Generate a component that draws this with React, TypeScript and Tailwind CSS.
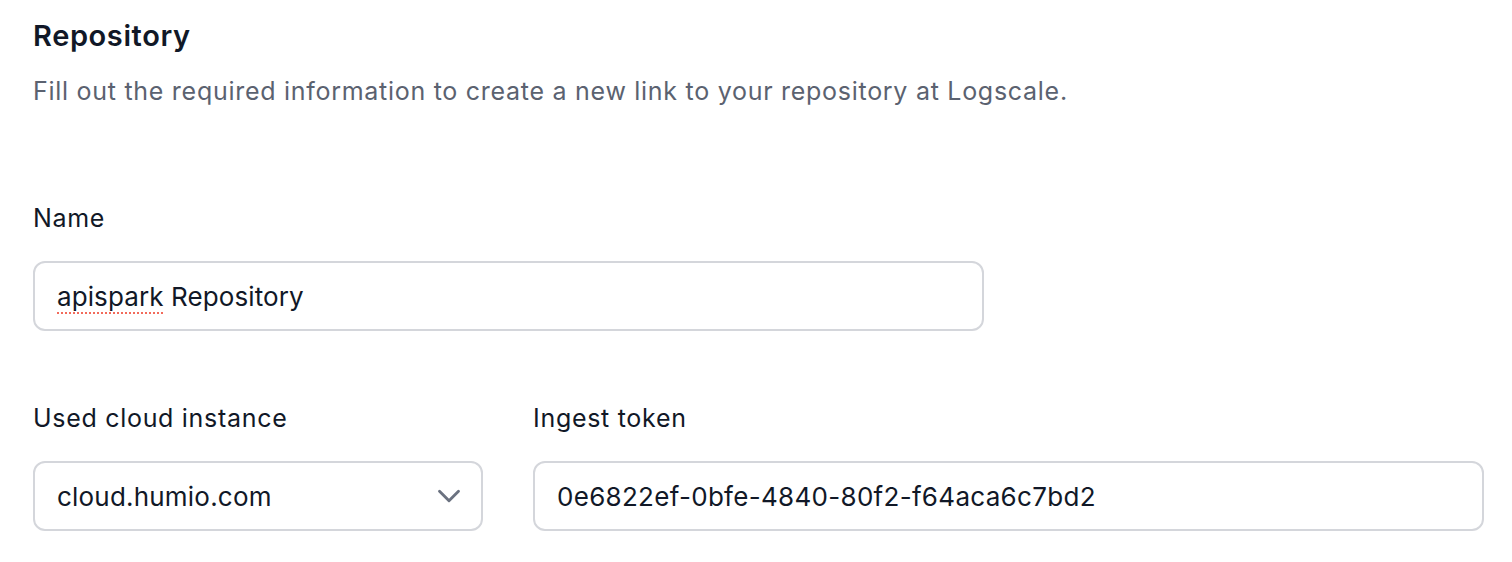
import { ChevronDown } from 'lucide-react';

export default function App() {
  return (
    <div className="min-h-[562px] bg-white pl-[33px] pt-[18px] font-['Inter',sans-serif] text-[#111827]">
      <h2 className="text-[29px] font-semibold leading-[36px] tracking-[0.6px]">Repository</h2>
      <p className="mt-[20px] text-[25px] leading-[34px] tracking-[0.72px] text-[#5b6270]">
        Fill out the required information to create a new link to your repository at Logscale.
      </p>

      <div className="mt-[93px] w-[951px]">
        <label className="block text-[25px] leading-[34px] tracking-[0.7px]">Name</label>
        <div className="mt-[26px] flex h-[70px] items-center rounded-[12px] border-2 border-[#d4d6db] px-[22px] text-[26px] tracking-[0.1px]">
          <span className="underline decoration-dotted decoration-[#f26b5b] decoration-2 underline-offset-[7px]">apispark</span>
          <span>&nbsp;Repository</span>
        </div>
      </div>

      <div className="mt-[70px] flex gap-[50px]">
        <div className="w-[450px] shrink-0">
          <label className="block text-[25px] leading-[34px] tracking-[0.7px]">Used cloud instance</label>
          <div className="mt-[26px] flex h-[70px] items-center justify-between rounded-[12px] border-2 border-[#d4d6db] pl-[22px] pr-[13px] text-[26px] tracking-[0.2px]">
            <span>cloud.humio.com</span>
            <ChevronDown className="h-[38px] w-[38px] text-[#6b7280]" strokeWidth={1.8} />
          </div>
        </div>
        <div className="w-[951px] shrink-0">
          <label className="block text-[25px] leading-[34px] tracking-[0.7px]">Ingest token</label>
          <div className="mt-[26px] flex h-[70px] items-center rounded-[12px] border-2 border-[#d4d6db] px-[22px] text-[26px] tracking-[0.3px]">
            0e6822ef-0bfe-4840-80f2-f64aca6c7bd2
          </div>
        </div>
      </div>
    </div>
  );
}
